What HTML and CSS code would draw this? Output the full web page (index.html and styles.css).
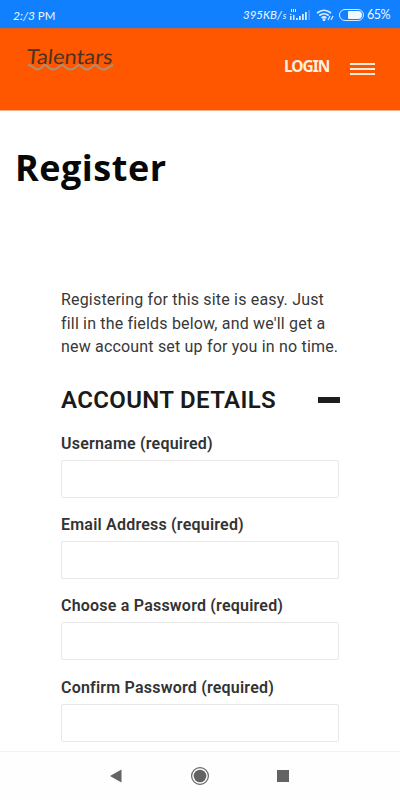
FILE: index.html
```html
<!DOCTYPE html>
<html lang="en">
<head>
<meta charset="utf-8">
<meta name="viewport" content="width=device-width, initial-scale=1">
<title>Register - Talentars</title>
<link rel="stylesheet" href="styles.css">
</head>
<body>
<div class="screen">
  <div class="status">
    <span class="time"><i>2:/3</i> PM</span>
    <div class="status-right">
      <i class="speed">395KB/<small>s</small></i>
      <svg class="signal" width="20" height="12" viewBox="0 0 20 12" fill="#d9ecff"><path d="M1 0h1v3H1zM3 0h1v3H3zM5 0h1v3H5zM0 5h1.500v1H0zM0 7h1.500v4H0zM3 6h1.500v5H3zM6 9h1.800v2H6zM9 7h1.800v4H9zM12 5h1.800v6H12zM15 3h1.800v8H15z"/><path d="M18.500 1h1.200v10h-1.200z" opacity=".4"/></svg>
      <svg class="wifi" width="18" height="12" viewBox="0 0 18 12" fill="none" stroke="#d9ecff" stroke-width="1.7"><path d="M1 4Q8 -1.500 15 4M3.300 6.500Q8 3 12.700 6.500M5.600 9Q8 7 10.400 9"/><circle cx="8" cy="10.700" r=".6"/><path d="M12 11l2-4M15 11l2-4" stroke-width="1.200"/></svg>
      <span class="battery"><span></span></span>
      <span class="percent">65%</span>
    </div>
  </div>
  <header class="header">
    <svg class="logo" width="92" height="36" viewBox="0 -6 92 36">
      <path d="M3 18Q6 18 8 20Q12 25 17 20Q20 16 23 20Q28 25 34 20Q37 16 40 20Q46 25 51 20Q54 16 57 20Q62 25 67 20Q70 16 73 20Q79 25 84 20L88 18" fill="none" stroke="#aa9174" stroke-width="2"/>
      <text transform="translate(1 17) skewX(-5)" textLength="86" lengthAdjust="spacingAndGlyphs">Talentars</text>
    </svg>
    <a class="login">LOGIN</a>
    <div class="menu"><span></span><span></span><span></span></div>
  </header>
  <main class="main">
    <h1>Register</h1>
    <form class="form">
      <p>Registering for this site is easy. Just<br>fill in the fields below, and we'll get a<br>new account set up for you in no time.</p>
      <div class="section"><h2>ACCOUNT DETAILS</h2><span class="minus"></span></div>
      <div class="field"><label for="user">Username (required)</label><input id="user" type="text"></div>
      <div class="field"><label for="email">Email Address (required)</label><input id="email" type="email"></div>
      <div class="field"><label for="pass">Choose a Password (required)</label><input id="pass" type="password"></div>
      <div class="field"><label for="confirm">Confirm Password (required)</label><input id="confirm" type="password"></div>
    </form>
  </main>
  <nav class="nav">
    <svg width="400" height="48" viewBox="0 0 400 48" fill="#636363"><path d="M110 24L121.500 17.500V30.500Z"/><circle cx="200" cy="24" r="6.300"/><circle cx="200" cy="24" r="8.400" fill="none" stroke="#636363" stroke-width="1.200"/><rect x="277" y="18" width="12" height="12"/></svg>
  </nav>
</div>
</body>
</html>
```
FILE: styles.css
```css
* { box-sizing: border-box; }
body { margin: 0; background: #fff; font-family: Roboto, sans-serif; }
.screen { display: flex; flex-direction: column; width: 400px; height: 800px; overflow: hidden; }
.status { display: flex; flex: none; justify-content: space-between; height: 28px; padding: 1px 10px 0 13px; background: #1180ff; color: #eef7ff; font: 12px/29px Lato, sans-serif; }
.time { font-size: 11.5px; }
.time i { font-size: 12px; }
.status-right { display: flex; align-items: center; }
.speed { width: 47px; font-size: 11.5px; white-space: nowrap; }
.speed small { font-size: 9px; margin-left: 1px; }
.wifi { margin-left: 6px; }
.battery { width: 25px; height: 12px; margin-left: 5px; padding: 1px; border: 1px solid #d9ecff; border-radius: 6px; }
.battery span { display: block; width: 14px; height: 8px; margin-left: 7px; background: #eff8ff; border-radius: 1px 4px 4px 1px; }
.percent { width: 23px; margin-left: 3px; font-size: 12.5px; letter-spacing: -.5px; white-space: nowrap; }
.header { display: flex; flex: none; height: 83px; padding: 12px 25px 0; background: #ff5700; border-top: 1px solid #d9602a; border-bottom: 1px solid #ffb08a; }
.logo text { font: 20.5px Lato, sans-serif; fill: #4b3322; }
.login { margin: 15px 0 0 167px; width: 45px; color: #fff0e5; font: 700 15.5px/20px "Noto Sans", sans-serif; letter-spacing: -1px; }
.menu { display: flex; flex-direction: column; gap: 3px; width: 25px; margin: 22px 0 0 21px; }
.menu span { height: 2px; background: #ffeadb; }
.main { height: 640px; flex: none; }
h1 { margin: 0; padding: 32px 0 0 15px; color: #080808; font: 700 36px/50px "Open Sans", sans-serif; letter-spacing: .5px; }
.form { width: 279px; margin: 95px 0 0 61px; color: #383838; }
.form p { margin: 0; font-size: 16px; line-height: 23.5px; letter-spacing: .18px; white-space: nowrap; }
.section { display: flex; align-items: center; justify-content: space-between; height: 32px; margin-top: 25px; }
h2 { margin: 0; color: #1a1a1a; font-size: 24px; font-weight: 600; line-height: 32px; letter-spacing: .35px; white-space: nowrap; }
.minus { width: 22px; height: 6px; background: #1d1d1d; }
.field { height: 81.4px; padding-top: 17px; }
.field label { display: block; font-size: 16px; font-weight: 600; line-height: 22px; letter-spacing: .21px; white-space: nowrap; color: #333; }
.field input { display: block; width: 278px; height: 38px; margin-top: 5px; padding: 0 10px; border: 1px solid #e8e8e8; border-radius: 2px; background: #fff; font: 16px Roboto, sans-serif; outline: 0; }
.nav { flex: none; height: 49px; border-top: 1px solid #f3f3f3; background: #fefefe; }
.nav svg { display: block; }
```
